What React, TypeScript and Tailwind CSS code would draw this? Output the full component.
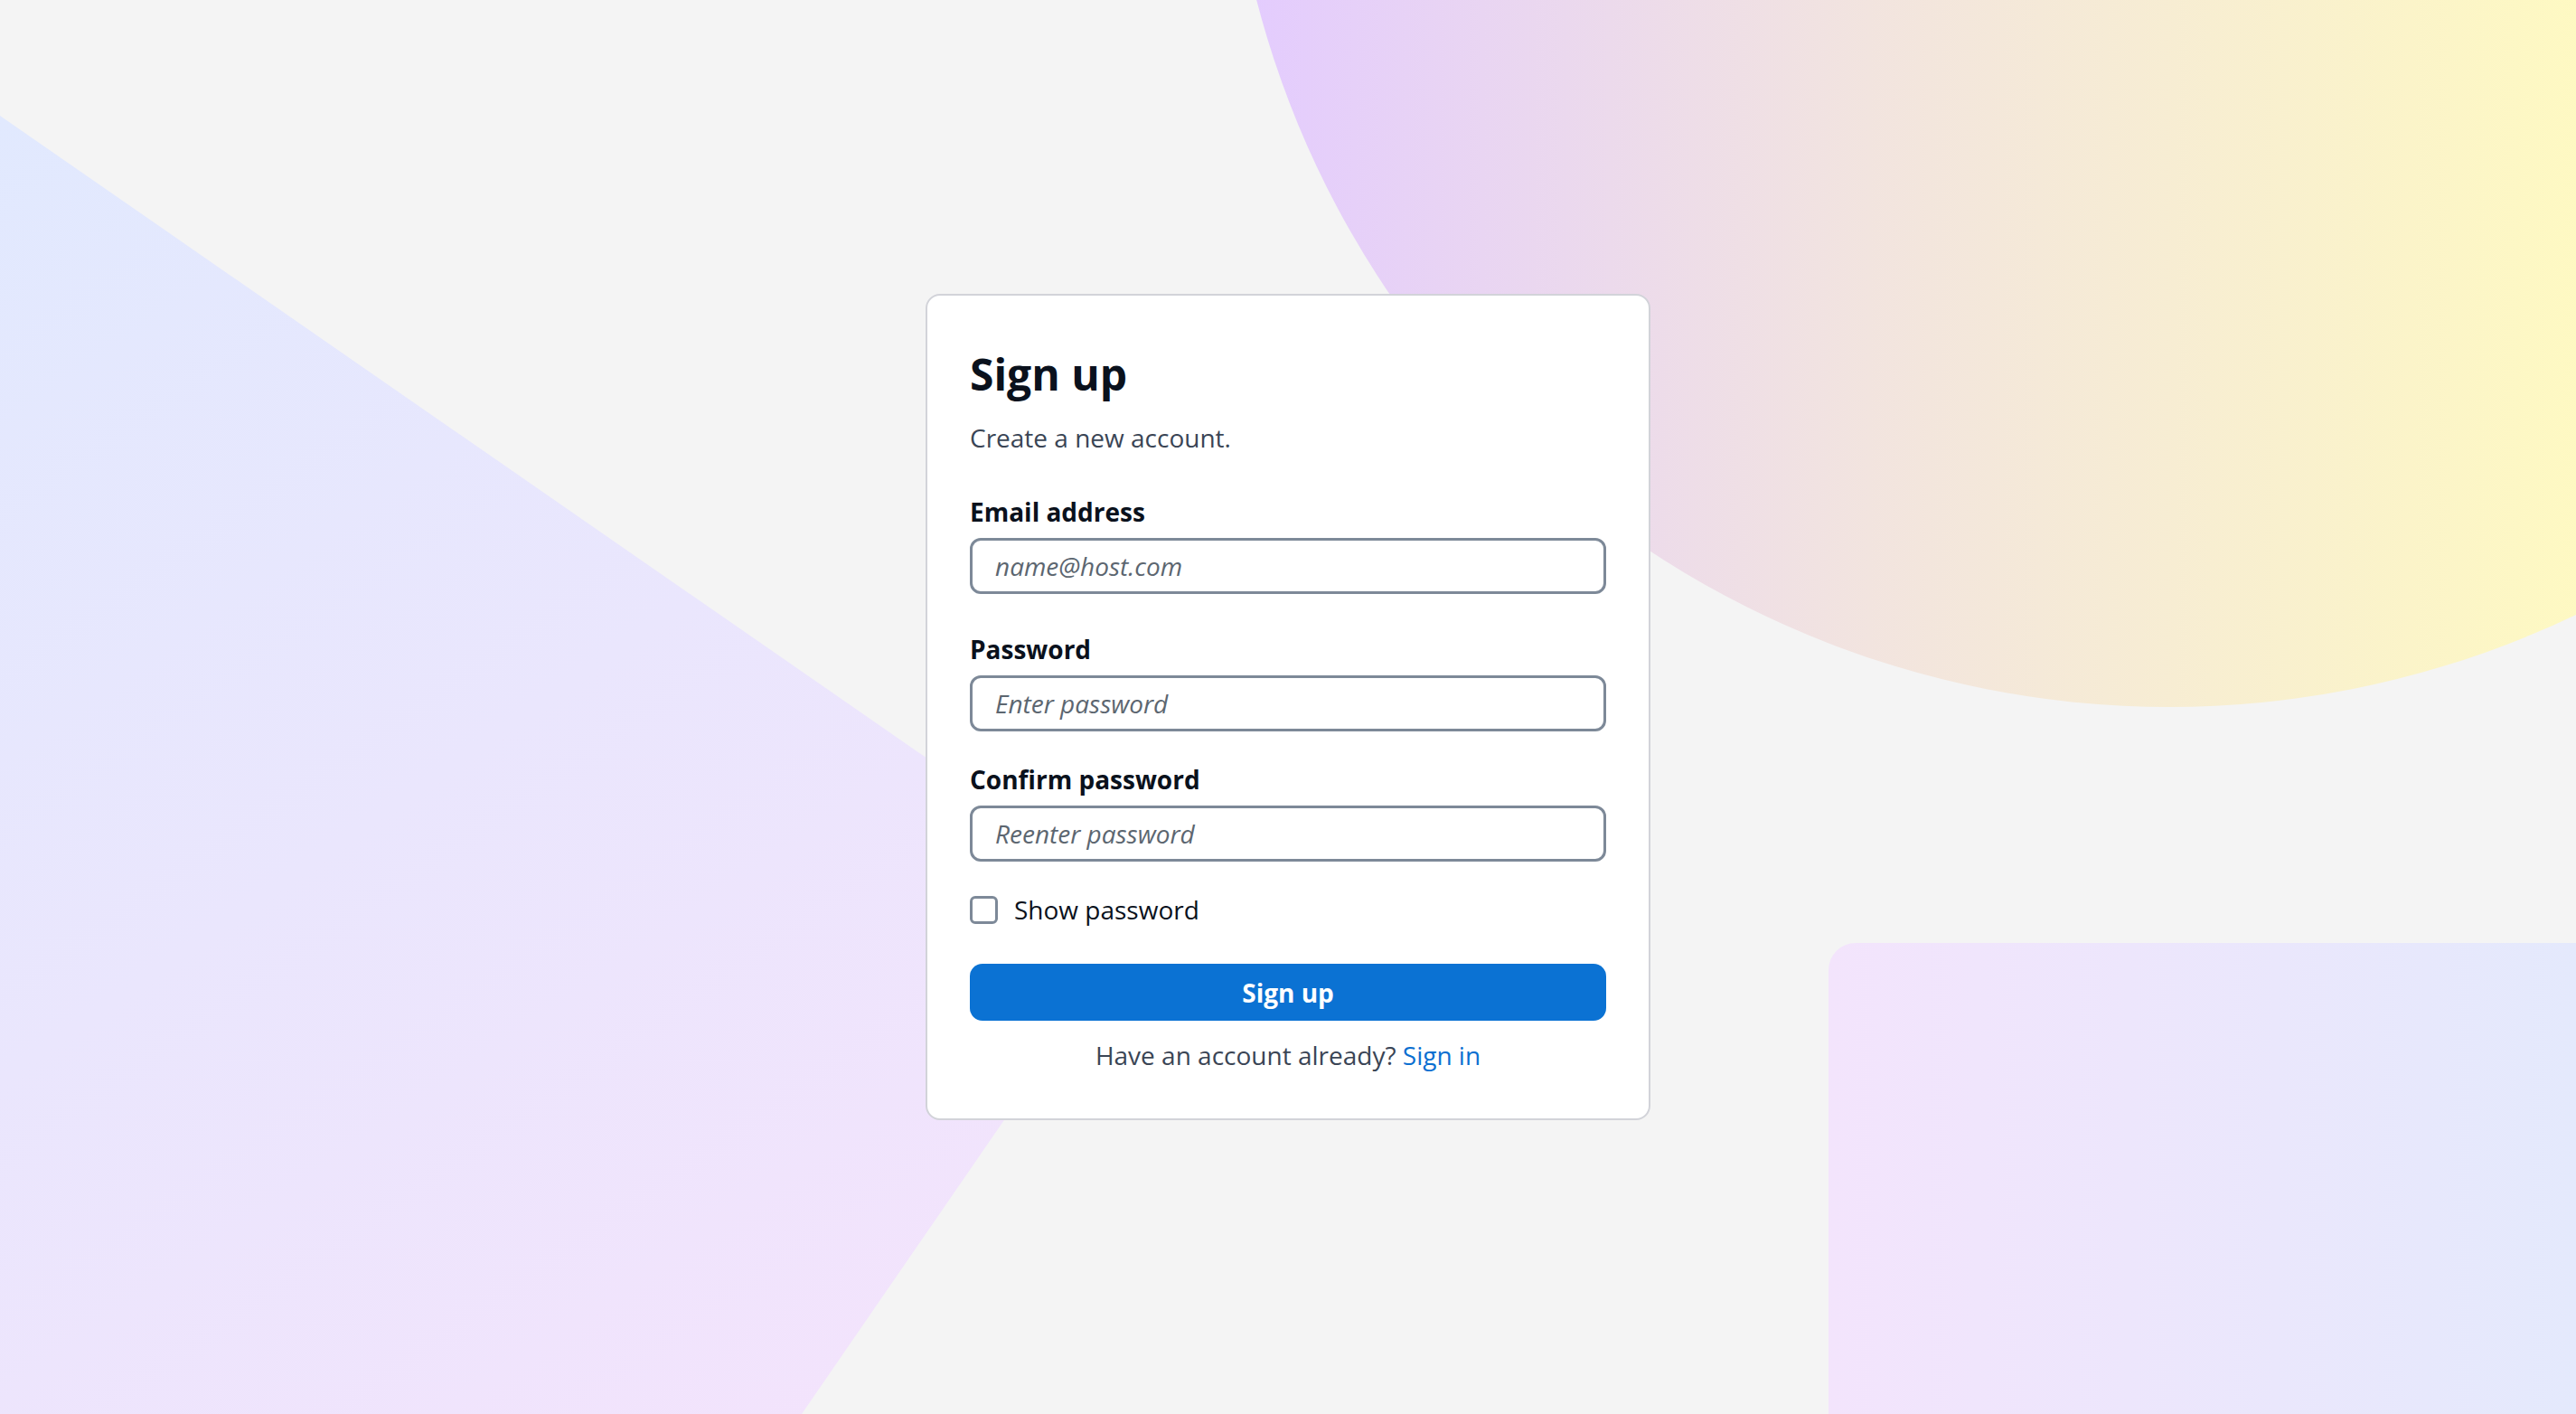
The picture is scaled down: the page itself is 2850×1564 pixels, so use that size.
import { useState } from 'react';

const Backdrop = () => (
  <svg
    className="absolute inset-0 h-full w-full"
    viewBox="0 0 2850 1564"
    preserveAspectRatio="none"
    aria-hidden="true"
  >
    <defs>
      <linearGradient id="wedge" gradientUnits="userSpaceOnUse" x1="0" y1="128" x2="1000" y2="1564">
        <stop offset="0" stopColor="#e1e9fe" />
        <stop offset="1" stopColor="#f3e3fc" />
      </linearGradient>
      <linearGradient id="sun" gradientUnits="userSpaceOnUse" x1="1357" y1="0" x2="3443" y2="0">
        <stop offset="0" stopColor="#e3cbff" />
        <stop offset="0.34" stopColor="#f2e4df" />
        <stop offset="0.72" stopColor="#fef9c2" />
        <stop offset="1" stopColor="#fef9c2" />
      </linearGradient>
      <linearGradient id="slab" gradientUnits="userSpaceOnUse" x1="2023" y1="0" x2="2850" y2="0">
        <stop offset="0" stopColor="#f3e4fc" />
        <stop offset="1" stopColor="#e4e9fc" />
      </linearGradient>
    </defs>
    <polygon points="0,128 1270,1008 887,1564 0,1564" fill="url(#wedge)" />
    <circle cx="2400" cy="-261" r="1043" fill="url(#sun)" />
    <rect x="2023" y="1043" width="900" height="600" rx="30" fill="url(#slab)" />
  </svg>
);

const Field = ({
  label,
  placeholder,
  type,
  gap,
}: {
  label: string;
  placeholder: string;
  type: string;
  gap: string;
}) => (
  <label className={`block ${gap}`}>
    <span className="block text-[28px] leading-[42px] font-bold text-[#0a111c]">{label}</span>
    <input
      type={type}
      placeholder={placeholder}
      className="mt-[8px] block h-[62px] w-full rounded-[12px] border-[3px] border-[#7d8998] bg-white px-[25px] text-[28px] text-[#0a111c] outline-none placeholder:italic placeholder:text-[#5c6670]"
    />
  </label>
);

const SignUpCard = () => {
  const [show, setShow] = useState(false);

  return (
    <div className="w-[802px] rounded-[16px] border-2 border-[#d2d3d9] bg-white px-[47px] pt-[57px] pb-[49px]">
      <h3 className="text-[48px] leading-[60px] font-bold text-[#0a111c]">Sign up</h3>
      <p className="mt-[19px] text-[28px] leading-[42px] text-[#3a4555]">Create a new account.</p>

      <Field label="Email address" placeholder="name@host.com" type="email" gap="mt-[40px]" />
      <Field
        label="Password"
        placeholder="Enter password"
        type={show ? 'text' : 'password'}
        gap="mt-[40px]"
      />
      <Field
        label="Confirm password"
        placeholder="Reenter password"
        type={show ? 'text' : 'password'}
        gap="mt-[32px]"
      />

      <label className="mt-[32px] flex h-[42px] items-center gap-[18px]">
        <input
          type="checkbox"
          checked={show}
          onChange={(e) => setShow(e.target.checked)}
          className="h-[31px] w-[31px] shrink-0 appearance-none rounded-[6px] border-[3px] border-[#7d8998] bg-white checked:bg-[#0b72d3]"
        />
        <span className="text-[28px] leading-[42px] text-[#0a111c]">Show password</span>
      </label>

      <button className="mt-[39px] h-[63px] w-full rounded-[14px] bg-[#0b72d3] text-[28px] font-bold text-white">
        Sign up
      </button>

      <p className="mt-[17px] text-center text-[28px] leading-[42px] text-[#3a4555]">
        Have an account already? <a className="text-[#0b6fd1]">Sign in</a>
      </p>
    </div>
  );
};

export default function App() {
  return (
    <div className="relative h-screen w-full overflow-hidden bg-[#f4f4f4] font-['Open_Sans',sans-serif]">
      <Backdrop />
      <main className="relative flex h-full items-center justify-center">
        <SignUpCard />
      </main>
    </div>
  );
}
